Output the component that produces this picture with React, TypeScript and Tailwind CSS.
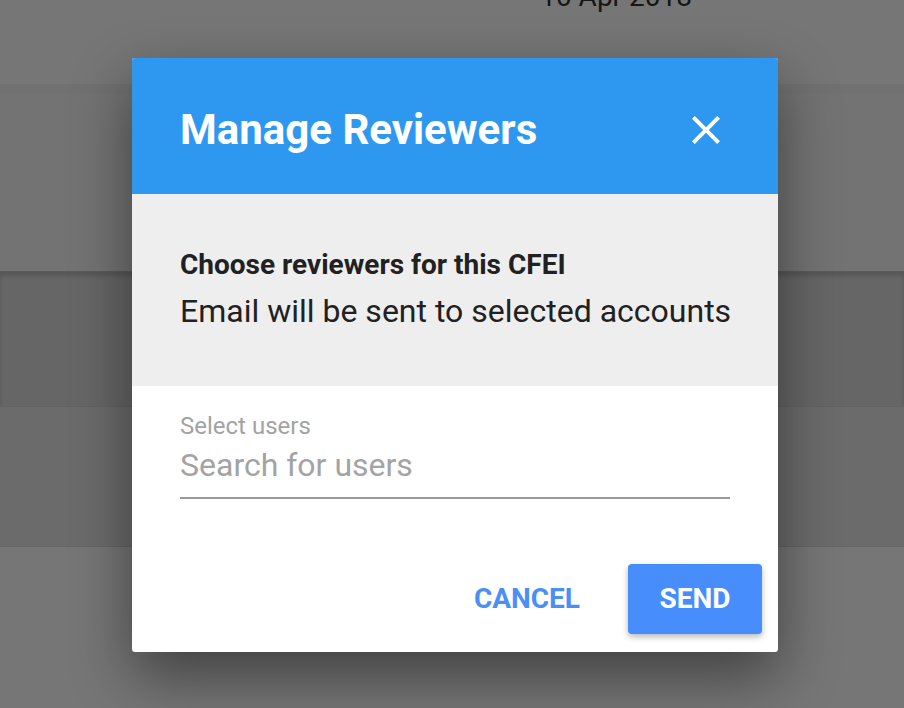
import React from "react";

function CloseIcon() {
  return (
    <svg viewBox="0 0 24 24" className="h-[48px] w-[48px]" fill="white">
      <path d="M19 6.41 17.59 5 12 10.59 6.41 5 5 6.41 10.59 12 5 17.59 6.41 19 12 13.41 17.59 19 19 17.59 13.41 12z" />
    </svg>
  );
}

export default function App() {
  return (
    <div
      className="relative h-[708px] w-[904px] overflow-hidden bg-[#767676]"
      style={{ fontFamily: "Roboto, 'Noto Sans', sans-serif" }}
    >
      {/* page behind the overlay */}
      <div className="flex h-[84px] justify-end bg-[#767676] pr-[212px]">
        <span className="-mt-[21px] text-[28px] leading-[36px] text-[#161616]">10 Apr 2018</span>
      </div>
      <div className="h-[10px] bg-[#717171]" />
      <div className="h-[177px] bg-[#737373]" />
      <div className="h-[135px] border-t border-[#5a5a5a] bg-[#666666] shadow-[inset_0_4px_4px_rgba(0,0,0,0.15)]" />
      <div className="h-[140px] border-t border-[#626262] bg-[#6b6b6b]" />
      <div className="h-[162px] border-t border-[#656565] bg-[#767676]" />

      {/* dialog */}
      <div className="absolute left-[132px] top-[58px] flex w-[646px] flex-col overflow-hidden rounded-[3px] bg-white shadow-[0_24px_60px_rgba(0,0,0,0.45)]">
        <div className="flex h-[136px] items-center justify-between bg-[#2e98f0] px-[48px] pt-[8px]">
          <h1 className="text-[42px] font-bold leading-none text-white">Manage Reviewers</h1>
          <button className="flex h-[48px] w-[48px] items-center justify-center">
            <CloseIcon />
          </button>
        </div>

        <div className="flex h-[192px] flex-col justify-center bg-[#eeeeee] px-[48px]">
          <p className="text-[28px] font-bold leading-[36px] text-[#212121]">
            Choose reviewers for this CFEI
          </p>
          <p className="mt-[6px] whitespace-nowrap text-[32px] leading-[44px] text-[#212121]">
            Email will be sent to selected accounts
          </p>
        </div>

        <div className="flex flex-col px-[48px] pt-[24px]">
          <label className="text-[24px] leading-[32px] text-[#a3a3a3]">Select users</label>
          <div className="mt-[2px] border-b-2 border-[#9a9a9a] pb-[11px]">
            <input
              placeholder="Search for users"
              className="w-full bg-transparent text-[32px] leading-[42px] text-[#212121] placeholder:text-[#a3a3a3] focus:outline-none"
            />
          </div>
        </div>

        <div className="flex items-center justify-end gap-[14px] pb-[18px] pr-[16px] pt-[65px]">
          <button className="h-[70px] rounded-[4px] px-[34px] text-[28px] font-bold uppercase text-[#4a8ff6]">
            Cancel
          </button>
          <button className="h-[70px] w-[134px] rounded-[4px] bg-[#478dfb] text-[28px] font-bold uppercase text-white shadow-[0_3px_6px_rgba(0,0,0,0.28)]">
            Send
          </button>
        </div>
      </div>
    </div>
  );
}
